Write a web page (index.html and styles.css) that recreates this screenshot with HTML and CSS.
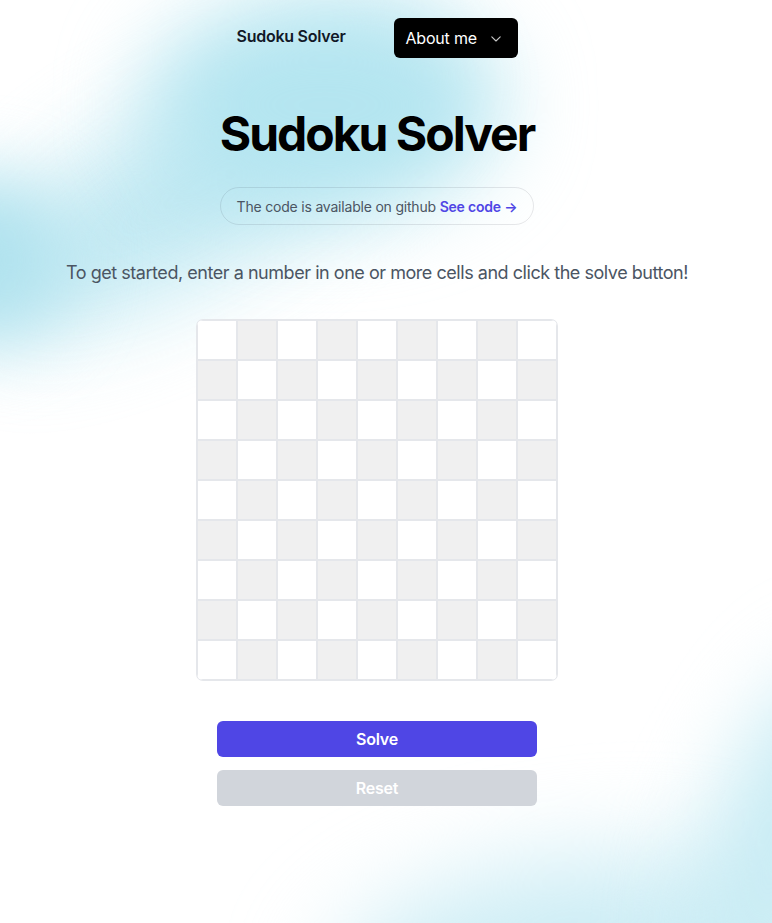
FILE: index.html
```html
<!DOCTYPE html>
<html lang="en">
<head>
<meta charset="utf-8">
<title>Sudoku Solver</title>
<link rel="stylesheet" href="styles.css">
</head>
<body>
<div class="backdrop" aria-hidden="true">
  <div class="bg bg-band"></div>
  <div class="bg bg-center"></div>
  <div class="bg bg-left"></div>
  <div class="bg bg-bottom"></div>
  <div class="bg bg-right"></div>
</div>
<div class="page">
  <header class="nav">
    <a class="brand" href="#">Sudoku Solver</a>
    <button class="about" type="button"><span>About me</span>
      <svg class="chev" width="10" height="6" viewBox="0 0 10 6" fill="none" stroke="currentColor" stroke-width="1.1" stroke-linecap="round" stroke-linejoin="round"><path d="M0.8 0.8L5 5L9.2 0.8"/></svg>
    </button>
  </header>
  <main class="main">
    <h1 class="title">Sudoku Solver</h1>
    <div class="pill">The code is available on github <a href="#" class="pill-link">See code <span aria-hidden="true">&rarr;</span></a></div>
    <p class="lead">To get started, enter a number in one or more cells and click the solve button!</p>
    <div class="board">
      <input class="cell"><input class="cell g"><input class="cell"><input class="cell g"><input class="cell"><input class="cell g"><input class="cell"><input class="cell g"><input class="cell">
      <input class="cell g"><input class="cell"><input class="cell g"><input class="cell"><input class="cell g"><input class="cell"><input class="cell g"><input class="cell"><input class="cell g">
      <input class="cell"><input class="cell g"><input class="cell"><input class="cell g"><input class="cell"><input class="cell g"><input class="cell"><input class="cell g"><input class="cell">
      <input class="cell g"><input class="cell"><input class="cell g"><input class="cell"><input class="cell g"><input class="cell"><input class="cell g"><input class="cell"><input class="cell g">
      <input class="cell"><input class="cell g"><input class="cell"><input class="cell g"><input class="cell"><input class="cell g"><input class="cell"><input class="cell g"><input class="cell">
      <input class="cell g"><input class="cell"><input class="cell g"><input class="cell"><input class="cell g"><input class="cell"><input class="cell g"><input class="cell"><input class="cell g">
      <input class="cell"><input class="cell g"><input class="cell"><input class="cell g"><input class="cell"><input class="cell g"><input class="cell"><input class="cell g"><input class="cell">
      <input class="cell g"><input class="cell"><input class="cell g"><input class="cell"><input class="cell g"><input class="cell"><input class="cell g"><input class="cell"><input class="cell g">
      <input class="cell"><input class="cell g"><input class="cell"><input class="cell g"><input class="cell"><input class="cell g"><input class="cell"><input class="cell g"><input class="cell">
    </div>
    <div class="actions">
      <button class="btn solve" type="button">Solve</button>
      <button class="btn reset" type="button">Reset</button>
    </div>
  </main>
</div>
</body>
</html>
```
FILE: styles.css
```css
* { box-sizing: border-box; }
html, body { margin: 0; padding: 0; }
html { overflow: hidden; }
body {
  font-family: Inter, "Noto Sans", sans-serif;
  background: #ffffff;
  color: #111827;
  width: 772px;
  height: 923px;
  overflow: hidden;
  position: relative;
}
.backdrop {
  position: absolute;
  left: 0;
  top: 0;
  width: 772px;
  height: 923px;
  overflow: hidden;
  pointer-events: none;
  z-index: 0;
}
.bg {
  position: absolute;
  border-radius: 50%;
}
.bg-band {
  left: -50px;
  top: 100px;
  width: 520px;
  height: 160px;
  background: #b8e6f1;
  transform: rotate(-30deg);
  filter: blur(48px);
  opacity: 0.9;
}
.bg-center {
  left: 150px;
  top: 0px;
  width: 350px;
  height: 210px;
  background: #b4e5f0;
  filter: blur(44px);
}
.bg-left {
  left: -120px;
  top: 175px;
  width: 190px;
  height: 170px;
  background: #b0e2ee;
  filter: blur(35px);
}
.bg-bottom {
  left: 330px;
  top: 860px;
  width: 480px;
  height: 200px;
  background: #cdedf5;
  transform: rotate(-8deg);
  filter: blur(48px);
}
.bg-right {
  left: 710px;
  top: 660px;
  width: 150px;
  height: 360px;
  background: #c9ecf4;
  transform: rotate(20deg);
  filter: blur(42px);
}
.page {
  position: relative;
  z-index: 1;
  width: 754px;
}
.nav {
  display: flex;
  justify-content: center;
  align-items: center;
  gap: 48px;
  padding-top: 18px;
}
.brand {
  font-size: 16px;
  font-weight: 600;
  color: #111827;
  text-decoration: none;
  line-height: 24px;
  margin-top: -4px;
  letter-spacing: -0.25px;
}
.about {
  display: flex;
  align-items: center;
  justify-content: space-between;
  white-space: nowrap;
  height: 40px;
  width: 124px;
  padding: 0 17px 0 12px;
  background: #000;
  color: #fff;
  border: 0;
  border-radius: 6px;
  font-family: inherit;
  font-size: 16px;
  font-weight: 400;
  letter-spacing: -0.2px;
}
.chev { display: block; color: #c8c8c8; margin-top: 1px; }
.main {
  display: flex;
  flex-direction: column;
  align-items: center;
}
.title {
  margin: 52px 0 0;
  font-size: 48px;
  line-height: 48px;
  font-weight: 700;
  letter-spacing: -2px;
  color: #000;
}
.pill {
  margin-top: 29px;
  height: 38px;
  padding: 0 16px;
  display: flex;
  align-items: center;
  border: 1px solid rgba(17, 24, 39, 0.1);
  border-radius: 999px;
  font-size: 14px;
  letter-spacing: -0.2px;
  color: #4b5563;
  white-space: pre;
}
.pill-link {
  color: #4f46e5;
  font-weight: 600;
  text-decoration: none;
}
.lead {
  margin: 32px 0 0;
  font-size: 18px;
  line-height: 32px;
  letter-spacing: -0.46px;
  color: #4b5563;
}
.board {
  margin-top: 31px;
  display: grid;
  grid-template-columns: repeat(9, 40px);
  grid-auto-rows: 40px;
  border-radius: 6px;
  overflow: hidden;
  box-shadow: 0 0 0 1px #e5e7eb;
}
.cell {
  width: 40px;
  height: 40px;
  margin: 0;
  border: 1px solid #e5e7eb;
  background: #fff;
  font-family: inherit;
  font-size: 18px;
  text-align: center;
  padding: 0;
  outline: none;
}
.cell.g { background: #f0f0f0; }
.actions {
  margin-top: 41px;
  display: flex;
  flex-direction: column;
  gap: 13px;
  width: 320px;
}
.btn {
  height: 36px;
  border: 0;
  border-radius: 6px;
  color: #fff;
  font-family: inherit;
  font-size: 16px;
  font-weight: 600;
  letter-spacing: -0.2px;
}
.solve { background: #4f46e5; }
.reset { background: #d1d5db; }
```
